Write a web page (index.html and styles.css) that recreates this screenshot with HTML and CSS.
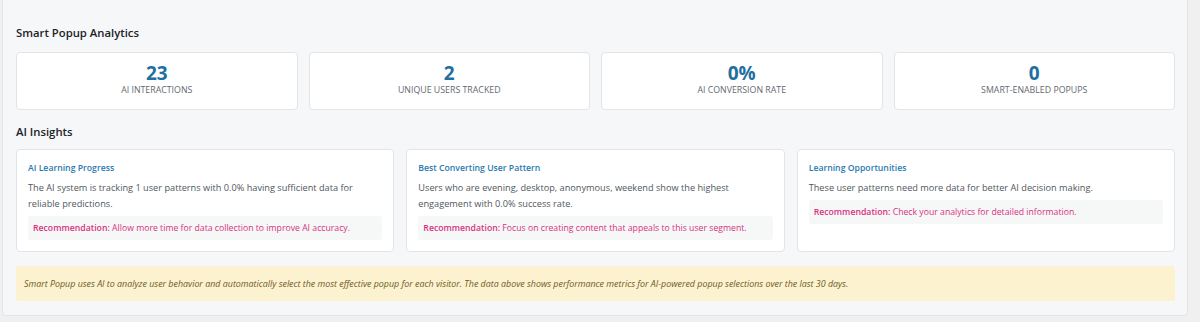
FILE: index.html
```html
<!DOCTYPE html>
<html>
<head>
<meta charset="utf-8">
<link rel="stylesheet" href="styles.css">
</head>
<body>
<div class="panel">
  <h3 class="section-title first">Smart Popup Analytics</h3>
  <div class="stats">
    <div class="stat"><div class="num">23</div><div class="label">AI Interactions</div></div>
    <div class="stat"><div class="num">2</div><div class="label">Unique Users Tracked</div></div>
    <div class="stat"><div class="num">0%</div><div class="label">AI Conversion Rate</div></div>
    <div class="stat"><div class="num">0</div><div class="label">Smart-Enabled Popups</div></div>
  </div>
  <h3 class="section-title">AI Insights</h3>
  <div class="insights">
    <div class="insight">
      <h4>AI Learning Progress</h4>
      <p>The AI system is tracking 1 user patterns with 0.0% having sufficient data for reliable predictions.</p>
      <div class="rec"><strong>Recommendation:</strong> Allow more time for data collection to improve AI accuracy.</div>
    </div>
    <div class="insight">
      <h4>Best Converting User Pattern</h4>
      <p>Users who are evening, desktop, anonymous, weekend show the highest engagement with 0.0% success rate.</p>
      <div class="rec"><strong>Recommendation:</strong> Focus on creating content that appeals to this user segment.</div>
    </div>
    <div class="insight">
      <h4>Learning Opportunities</h4>
      <p>These user patterns need more data for better AI decision making.</p>
      <div class="rec"><strong>Recommendation:</strong> Check your analytics for detailed information.</div>
    </div>
  </div>
  <div class="notice">Smart Popup uses AI to analyze user behavior and automatically select the most effective popup for each visitor. The data above shows performance metrics for AI-powered popup selections over the last 30 days.</div>
</div>
</body>
</html>
```
FILE: styles.css
```css
html, body {
  margin: 0;
  padding: 0;
  background: #f0f0f1;
  font-family: "Open Sans", "Noto Sans", sans-serif;
  color: #50575e;
}
body {
  width: 1200px;
  height: 322px;
  overflow: hidden;
}
.panel {
  margin-left: 2px;
  width: 1186px;
  box-sizing: border-box;
  margin-top: -10px;
  padding: 33px 12px 14px 13px;
  background: #f6f7f9;
  border: 1px solid #e4e5e7;
  border-radius: 0 0 4px 4px;
}
.section-title {
  margin: 0 0 8px;
  font-size: 11.3px;
  font-weight: 600;
  color: #1d2327;
  line-height: 18px;
}
.section-title.first {
  margin-bottom: 10px;
}
.stats {
  display: grid;
  grid-template-columns: repeat(4, 1fr);
  gap: 11px;
  margin-bottom: 13px;
}
.stat {
  background: #fff;
  border: 1px solid #e2e4e7;
  border-radius: 4px;
  height: 58px;
  box-sizing: border-box;
  text-align: center;
  padding-top: 9px;
}
.num {
  font-size: 19px;
  font-weight: 700;
  color: #1f6fa0;
  line-height: 22px;
}
.label {
  font-size: 8.8px;
  text-transform: uppercase;
  color: #646970;
  line-height: 12px;
}
.insights {
  display: grid;
  grid-template-columns: repeat(3, 1fr);
  gap: 12px;
  margin-bottom: 14px;
}
.insight {
  background: #fff;
  border: 1px solid #e2e4e7;
  border-radius: 4px;
  height: 103px;
  box-sizing: border-box;
  padding: 11px 11px 0;
}
.insight h4 {
  margin: 0 0 5px;
  font-size: 8.7px;
  font-weight: 600;
  color: #2a7ab0;
  line-height: 14px;
}
.insight p {
  margin: 0 0 4px;
  font-size: 9.2px;
  line-height: 16px;
  color: #50575e;
}
.rec {
  background: #f6f7f7;
  border-radius: 3px;
  padding: 4px 5px;
  font-size: 8.7px;
  line-height: 16px;
  color: #d63384;
}
.rec strong {
  font-weight: 600;
}
.notice {
  background: #fdf2cf;
  border-radius: 3px;
  height: 35px;
  box-sizing: border-box;
  padding: 10px 8px;
  font-size: 8.9px;
  font-style: italic;
  line-height: 15px;
  color: #6b5a24;
}
```
